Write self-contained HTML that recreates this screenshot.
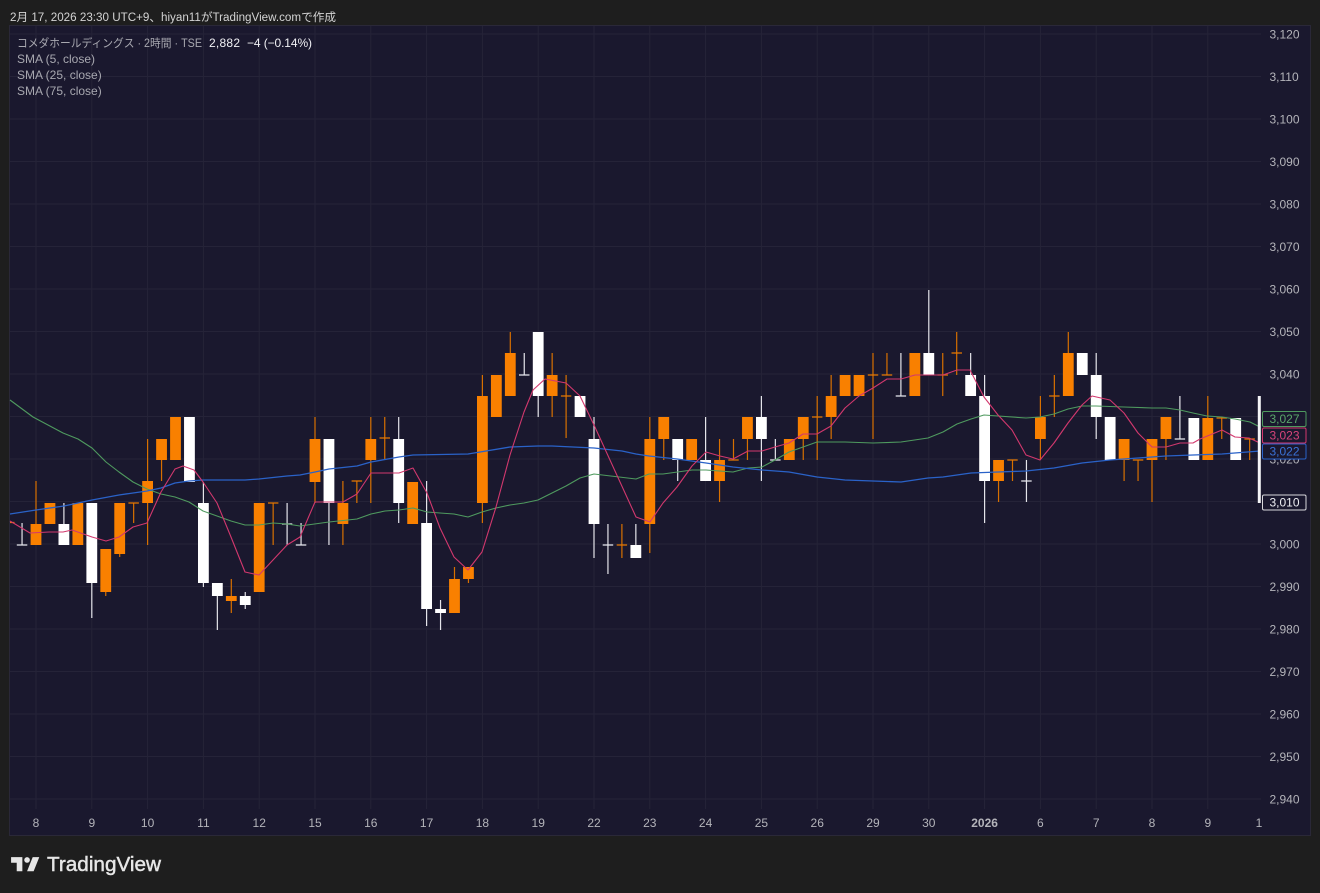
<!DOCTYPE html>
<html><head><meta charset="utf-8"><title>TradingView</title>
<style>
html,body{margin:0;padding:0;background:#1e1e1e;width:1320px;height:893px;overflow:hidden}
svg{display:block;font-family:"Liberation Sans","Noto Sans CJK JP",sans-serif}
</style></head><body>
<svg width="1320" height="893" viewBox="0 0 1320 893" xmlns="http://www.w3.org/2000/svg">
<rect width="1320" height="893" fill="#1e1e1e"/>
<rect x="9.5" y="25.5" width="1301" height="810" fill="#1a182e" stroke="#2a2838"/>
<!-- grid -->
<path fill="none" stroke="#252338" stroke-width="1" d="M10 34H1261M10 76.5H1261M10 119H1261M10 161.5H1261M10 204H1261M10 246.5H1261M10 289H1261M10 331.5H1261M10 374H1261M10 416.5H1261M10 459H1261M10 501.5H1261M10 544H1261M10 586.5H1261M10 629H1261M10 671.5H1261M10 714H1261M10 756.5H1261M10 799H1261
M36 26V809M91.8 26V809M147.6 26V809M203.4 26V809M259.2 26V809M315 26V809M370.8 26V809M426.6 26V809M482.4 26V809M538.2 26V809M594 26V809M649.8 26V809M705.6 26V809M761.4 26V809M817.2 26V809M873 26V809M928.8 26V809M984.6 26V809M1040.4 26V809M1096.2 26V809M1152 26V809M1207.8 26V809"/>
<!-- wicks orange -->
<path fill="none" stroke="#d87000" stroke-width="1.2" d="M36 481V545M105.75 592V596M119.7 554V557M133.65 503V523M147.6 439V545M161.55 460V481M231.3 579V613M273.15 503V545M315 417V503M342.9 481V545M356.85 481V503M370.8 417V503M384.75 417V460M454.5 567V579M468.45 579V583M482.4 375V523M510.3 332V353M552.15 353V417M566.1 375V438M621.9 524V558M649.8 417V553M663.75 439V460M719.55 439V502M733.5 439V460M747.45 439V460M803.25 439V460M817.2 396V460M831.15 375V439M873 353V439M886.95 353V375M942.75 353V396M956.7 332V375M998.55 481V502M1012.5 460V481M1040.4 396V460M1054.35 375V417M1068.3 332V353M1124.1 460V481M1138.05 460V481M1152 460V502M1165.95 439V460M1207.8 396V418M1221.75 418V439M1249.65 439V460"/>
<!-- orange dojis -->
<path fill="none" stroke="#e87800" stroke-width="1.3" d="M10 522.5H14.5M128.4 503H138.9M351.6 481H362.1M379.5 438H390M268 503H278.4M560.9 396H571.3M616.7 545H627.1M728.3 460H738.7M812 417H822.4M867.8 375H878.2M881.7 375H892.2M937.5 375H948M951.5 353H962M1007.3 460H1017.7M1049.1 396H1059.6M1132.8 460H1143.3M1216.5 418H1227M1244.4 439H1254.9"/>
<!-- wicks white -->
<path fill="none" stroke="#e4e4ea" stroke-width="1.2" d="M22.05 523V545M63.9 503V524M91.8 583V618M203.4 482V587M217.35 596V630M245.25 592V609M287.1 503V545M301.05 523V545M328.95 503V545M398.7 417V523M426.6 481V626M440.55 600V630M524.25 353V375M538.2 396V417M594 417V558M607.95 524V574M635.85 524V545M677.7 460V481M705.6 417V460M761.4 396V481M775.35 439V460M900.9 353V396M928.8 290V353M970.65 353V375M984.6 375V523M1026.45 460V502M1096.2 353V439M1179.9 396V439"/>
<!-- white dojis -->
<path fill="none" stroke="#e8e8ee" stroke-width="1.3" d="M16.8 545H27.3M281.9 524H292.3M295.8 545H306.3M519 375H529.5M602.7 545H613.2M770.1 460H780.6M895.7 396H906.1M1021.2 481H1031.7M1174.7 439H1185.1"/>
<!-- orange bodies -->
<path fill="none" stroke="#f98000" stroke-width="10.8" d="M36 524V545M49.95 503V524M77.85 503V545M105.75 549V592M119.7 503V554M147.6 481V503M161.55 439V460M175.5 417V460M231.3 596V601M259.2 503V592M315 439V482M342.9 503V524M370.8 439V460M412.65 482V524M454.5 579V613M468.45 567V579M482.4 396V503M496.35 375V417M510.3 353V396M552.15 375V396M649.8 439V524M663.75 417V439M691.65 439V460M719.55 460V481M747.45 417V439M789.3 439V460M803.25 417V439M831.15 396V417M845.1 375V396M859.05 375V396M914.85 353V396M998.55 460V481M1040.4 417V439M1068.3 353V396M1124.1 439V460M1152 439V460M1165.95 417V439M1207.8 418V460"/>
<!-- white bodies -->
<path fill="none" stroke="#ffffff" stroke-width="10.8" d="M63.9 524V545M91.8 503V583M189.45 417V482M203.4 503V583M217.35 583V596M245.25 596V605M328.95 439V503M398.7 439V503M426.6 523V609M440.55 609V613M538.2 332V396M580.05 396V417M594 439V524M635.85 545V558M677.7 439V460M705.6 460V481M761.4 417V439M928.8 353V375M970.65 375V396M984.6 396V481M1082.25 353V375M1096.2 375V417M1110.15 417V460M1193.85 418V460M1235.7 418V460"/>
<!-- MA lines -->
<polyline fill="none" stroke="#4f9a5f" stroke-width="1.1" stroke-linejoin="round" points="10,400 33,417 63,433 78,439 92,448 106,462 119,472 133,482 147,489 161,494 175,497 189,502 203,511 217,516 231,521 245,525 259,525 273,523 287,524 300,526 329,522 357,519 371,514 385,511 399,510 413,508 427,512 440,513 454,514 468,517 482,512 496,508 510,505 524,503 538,500 552,493 566,486 580,478 594,474 636,479 649,474 663,474 692,470 706,470 733,472 748,468 762,467 775,460 789,452 803,447 817,442 845,442 873,443 901,442 928,438 943,432 957,424 971,419 984,415 998,416 1026,418 1040,417 1054,414 1068,409 1082,406 1096,406 1124,407 1152,408 1166,408 1180,410 1193,413 1207,416 1222,417 1235,419 1250,422 1260,427"/>
<polyline fill="none" stroke="#2a62c8" stroke-width="1.3" stroke-linejoin="round" points="10,514 36,510 64,506 92,500 119,495 147,491 161,488 175,483 189,481 203,480 245,480 259,479 287,476 300,475 315,472 329,469 357,466 371,462 399,457 413,455 468,454 510,447 538,446 552,446 594,448 622,451 636,454 649,456 677,459 706,463 733,467 762,470 789,472 817,477 845,480 873,481 901,482 928,478 943,477 971,473 998,472 1026,471 1054,468 1082,463 1110,460 1138,458 1166,456 1193,455 1222,454 1260,451"/>
<polyline fill="none" stroke="#d2386e" stroke-width="1.1" stroke-linejoin="round" points="10,521 30,533 49,532 63,532 72,530 92,537 106,541 119,537 133,527 147,523 161,492 175,469 183,466 194,470 203,482 217,503 231,537 245,572 259,575 287,545 300,537 315,502 343,502 357,494 371,473 399,473 413,468 427,493 440,528 454,557 468,570 482,552 496,507 510,455 524,412 533,390 545,379 566,383 580,396 594,425 636,517 650,522 663,503 677,487 692,466 706,452 720,456 733,459 748,451 762,451 775,447 789,443 803,434 817,434 831,426 845,408 859,396 873,388 887,379 901,379 915,375 928,375 943,375 957,370 970,370 984,397 998,415 1012,430 1026,455 1040,460 1054,443 1068,423 1082,405 1092,396 1110,400 1124,413 1138,433 1152,447 1166,447 1180,443 1193,443 1200,439 1222,430 1235,437 1249,438 1260,443"/>
<rect x="1257.8" y="396" width="3" height="107" fill="#f4f4f6"/>
<!-- price axis -->
<g font-size="12" fill="#b4b4ba">
<text x="1269.5" y="38.5">3,120</text><text x="1269.5" y="81">3,110</text><text x="1269.5" y="123.5">3,100</text><text x="1269.5" y="166">3,090</text><text x="1269.5" y="208.5">3,080</text><text x="1269.5" y="251">3,070</text><text x="1269.5" y="293.5">3,060</text><text x="1269.5" y="336">3,050</text><text x="1269.5" y="378.5">3,040</text><text x="1269.5" y="463.5">3,020</text><text x="1269.5" y="548.5">3,000</text><text x="1269.5" y="591">2,990</text><text x="1269.5" y="633.5">2,980</text><text x="1269.5" y="676">2,970</text><text x="1269.5" y="718.5">2,960</text><text x="1269.5" y="761">2,950</text><text x="1269.5" y="803.5">2,940</text>
</g>
<g font-size="12">
<rect x="1262.5" y="411.5" width="43.5" height="15" rx="1.5" fill="#1a182e" stroke="#4f9a5f"/><text x="1269.5" y="423" fill="#5aa66a">3,027</text>
<rect x="1262.5" y="428" width="43.5" height="15" rx="1.5" fill="#1a182e" stroke="#d2386e"/><text x="1269.5" y="439.5" fill="#d8447a">3,023</text>
<rect x="1262.5" y="444" width="43.5" height="15" rx="1.5" fill="#1a182e" stroke="#2a62c8"/><text x="1269.5" y="455.5" fill="#3a72d8">3,022</text>
<rect x="1262.5" y="495" width="43.5" height="15" rx="1.5" fill="#1a182e" stroke="#d8d8dc"/><text x="1269.5" y="506.5" fill="#f0f0f4">3,010</text>
</g>
<!-- time axis -->
<g font-size="12" fill="#b4b4ba" text-anchor="middle">
<text x="36" y="827">8</text><text x="91.8" y="827">9</text><text x="147.6" y="827">10</text><text x="203.4" y="827">11</text><text x="259.2" y="827">12</text><text x="315" y="827">15</text><text x="370.8" y="827">16</text><text x="426.6" y="827">17</text><text x="482.4" y="827">18</text><text x="538.2" y="827">19</text><text x="594" y="827">22</text><text x="649.8" y="827">23</text><text x="705.6" y="827">24</text><text x="761.4" y="827">25</text><text x="817.2" y="827">26</text><text x="873" y="827">29</text><text x="928.8" y="827">30</text><text x="984.6" y="827" font-weight="bold">2026</text><text x="1040.4" y="827">6</text><text x="1096.2" y="827">7</text><text x="1152" y="827">8</text><text x="1207.8" y="827">9</text><text x="1259" y="827">1</text>
</g>
<!-- header -->
<text x="10" y="21" font-size="11.5" fill="#d4d4d4" textLength="326" lengthAdjust="spacingAndGlyphs">2月 17, 2026 23:30 UTC+9、hiyan11がTradingView.comで作成</text>
<!-- legend -->
<text x="17" y="47" font-size="11.5" fill="#a8a8b0" textLength="185" lengthAdjust="spacingAndGlyphs">コメダホールディングス · 2時間 · TSE</text>
<text x="209" y="47" font-size="12" fill="#f0f0f4" textLength="31">2,882</text>
<text x="247" y="47" font-size="12" fill="#f0f0f4" textLength="65">−4 (−0.14%)</text>
<text x="17" y="63" font-size="12" fill="#a8a8b0">SMA (5, close)</text>
<text x="17" y="79" font-size="12" fill="#a8a8b0">SMA (25, close)</text>
<text x="17" y="95" font-size="12" fill="#a8a8b0">SMA (75, close)</text>
<!-- logo -->
<g transform="translate(9.2,851.5) scale(.94)"><path fill="#e6e6e6" d="M14 6H2v6h6v9h6V6Zm12 15h-7l6-15h7l-6 15Zm-7-9a3 3 0 1 0 0-6 3 3 0 0 0 0 6Z"/></g>
<text x="47" y="871" font-size="20" fill="#e6e6e6" stroke="#e6e6e6" stroke-width=".45" textLength="114" lengthAdjust="spacingAndGlyphs">TradingView</text>
</svg>
</body></html>
